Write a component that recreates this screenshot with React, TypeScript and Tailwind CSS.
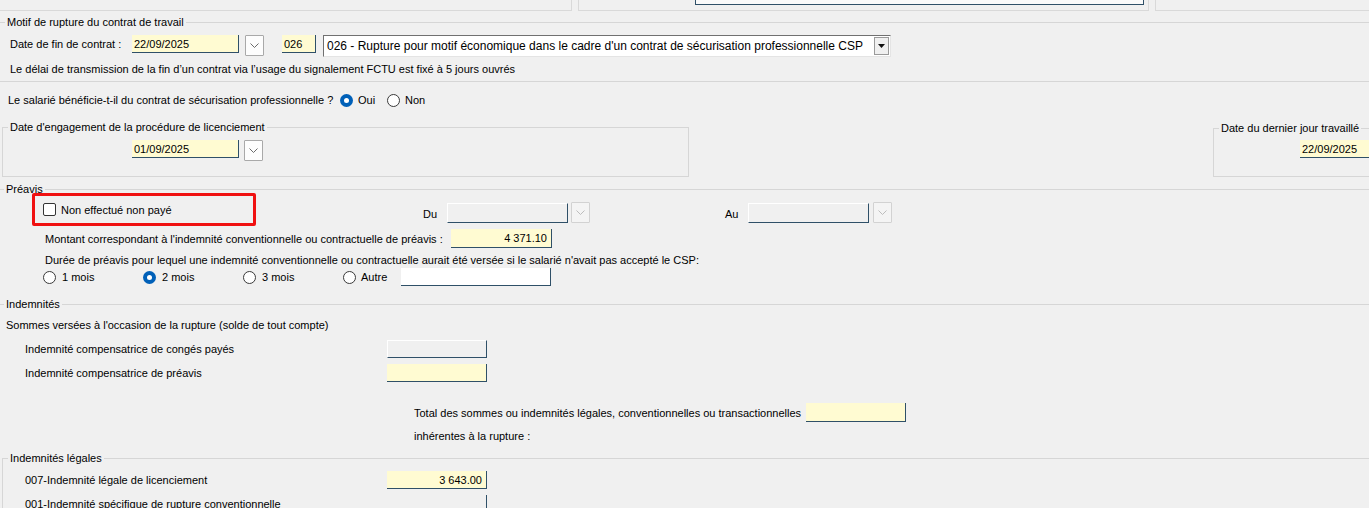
import React from 'react';

type Tone = 'yellow' | 'gray' | 'white' | 'plain';

const toneClass: Record<Tone, string> = {
  yellow: 'bg-[#fffbd2] border-b border-r border-[#2f5068]',
  gray: 'bg-[#f0f0f0] border border-t-white border-l-white border-b-[#2f5068] border-r-[#2f5068]',
  white: 'bg-white border-b border-r border-[#2f5068]',
  plain: 'bg-[#f0f0f0] border-b border-r border-[#2f5068]',
};

const Field = ({
  w,
  h = 'h-[18px]',
  tone = 'yellow',
  value,
  right,
  extra = '',
}: {
  w: string;
  h?: string;
  tone?: Tone;
  value?: string;
  right?: boolean;
  extra?: string;
}) => (
  <div
    className={`${w} ${h} ${toneClass[tone]} ${extra} shrink-0 flex items-center px-[2px] ${
      right ? 'justify-end' : ''
    }`}
  >
    {value && <span className="leading-[14px]">{value}</span>}
  </div>
);

const DropBtn = ({ disabled, extra = '' }: { disabled?: boolean; extra?: string }) => (
  <div
    className={`w-[19px] h-[21px] shrink-0 flex items-center justify-center rounded-[1px] border ${
      disabled ? 'border-[#d2d2d2] bg-[#f4f4f4]' : 'border-[#a9a9a9] bg-[#fdfdfd]'
    } ${extra}`}
  >
    <svg width="9" height="5" viewBox="0 0 9 5" fill="none">
      <path d="M0.5 0.5L4.5 4.5L8.5 0.5" stroke={disabled ? '#bdbdbd' : '#6b6b6b'} strokeWidth="1" />
    </svg>
  </div>
);

const Radio = ({ checked }: { checked?: boolean }) =>
  checked ? (
    <span className="w-[13px] h-[13px] shrink-0 rounded-full bg-[#0060b8] flex items-center justify-center">
      <span className="w-[5px] h-[5px] rounded-full bg-white" />
    </span>
  ) : (
    <span className="w-[13px] h-[13px] shrink-0 rounded-full bg-white border border-[#3a3a3a]" />
  );

const Option = ({ label, checked, w, gap = 'gap-[5px]' }: { label: string; checked?: boolean; w: string; gap?: string }) => (
  <div className={`${w} shrink-0 flex items-center ${gap}`}>
    <Radio checked={checked} />
    <span>{label}</span>
  </div>
);

export default function App() {
  return (
    <div className="w-[1369px] h-[508px] overflow-hidden bg-[#f0f0f0] text-black font-['Liberation_Sans',Arial,sans-serif] text-[11px] leading-[14px]">
      {/* remnants of the upper panel */}
      <div className="flex h-[11px]">
        <div className="w-[572px] border-r border-b border-[#d9d9d9]" />
        <div className="ml-[6px] w-[571px] border-l border-r border-b border-[#d9d9d9]">
          <div className="ml-[116px] w-[449px] h-[5px] bg-[#fafafa] border-b border-l border-r border-[#2f5068]" />
        </div>
        <div className="ml-[6px] flex-1 border-l border-b border-[#d9d9d9]" />
      </div>

      {/* Motif de rupture */}
      <fieldset className="mt-[3px] border-t border-b border-[#d6d6d6] pb-[5px]">
        <legend className="ml-[5px] px-[2px] leading-[16px]">Motif de rupture du contrat de travail</legend>
        <div className="mt-[5px] flex items-start">
          <span className="pl-[10px] w-[132px] leading-[18px] shrink-0">Date de fin de contrat :</span>
          <Field w="w-[107px]" value="22/09/2025" />
          <DropBtn extra="ml-[6px] h-[20px]" />
          <Field w="w-[34px]" value="026" extra="ml-[18px]" />
          <div className="ml-[7px] w-[568px] h-[22px] bg-white border-t border-l border-[#707070] border-r border-b border-r-[#e4e4e4] border-b-[#e4e4e4] flex items-center justify-between pl-[3px] pr-[1px]">
            <span className="text-[12px] leading-[16px]">
              026 - Rupture pour motif économique dans le cadre d'un contrat de sécurisation professionnelle CSP
            </span>
            <span className="w-[15px] h-[18px] bg-[#f0f0f0] border border-[#9a9a9a] flex items-center justify-center">
              <svg width="7" height="4" viewBox="0 0 7 4">
                <path d="M0 0H7L3.5 4Z" fill="#111" />
              </svg>
            </span>
          </div>
        </div>
        <p className="mt-[5px] pl-[10px]">
          Le délai de transmission de la fin d’un contrat via l’usage du signalement FCTU est fixé à 5 jours ouvrés
        </p>
      </fieldset>

      {/* CSP question */}
      <div className="mt-[10px] pl-[8px] flex items-center h-[16px]">
        <span className="w-[332px] shrink-0">Le salarié bénéficie-t-il du contrat de sécurisation professionnelle ?</span>
        <Option label="Oui" checked w="w-[47px]" />
        <Option label="Non" w="w-[60px]" />
      </div>

      {/* dates */}
      <div className="mt-[11px] flex items-start w-[1500px]">
        <fieldset className="ml-[2px] w-[687px] h-[58px] border border-[#d6d6d6] shrink-0">
          <legend className="ml-[5px] px-[2px] leading-[16px]">Date d'engagement de la procédure de licenciement</legend>
          <div className="mt-[5px] pl-[129px] flex items-start">
            <Field w="w-[107px]" value="01/09/2025" />
            <DropBtn extra="ml-[5px] h-[20px]" />
          </div>
        </fieldset>
        <fieldset className="ml-[524px] mt-[1px] w-[200px] h-[57px] border border-[#d6d6d6] shrink-0">
          <legend className="ml-[5px] px-[2px] leading-[16px]">Date du dernier jour travaillé</legend>
          <div className="mt-[4px] pl-[86px]">
            <Field w="w-[100px]" value="22/09/2025" />
          </div>
        </fieldset>
      </div>

      {/* Préavis */}
      <fieldset className="mt-[4px] border-t border-[#d6d6d6]">
        <legend className="ml-[4px] px-[2px] leading-[16px]">Préavis</legend>
        <div className="mt-[5px] flex items-start">
          <div className="ml-[32px] -mt-[9px] w-[224px] h-[33px] border-[3px] border-[#f01010] rounded-[2px] flex items-center pl-[8px] gap-[5px] shrink-0">
            <span className="w-[13px] h-[13px] bg-white border border-[#333] rounded-[2px]" />
            <span>Non effectué non payé</span>
          </div>
          <span className="ml-[167px] mt-[5px] w-[24px] shrink-0">Du</span>
          <Field w="w-[121px]" h="h-[20px]" tone="gray" extra="mt-[1px]" />
          <DropBtn disabled extra="ml-[3px]" />
          <span className="ml-[135px] mt-[5px] w-[23px] shrink-0">Au</span>
          <Field w="w-[121px]" h="h-[20px]" tone="gray" extra="mt-[1px]" />
          <DropBtn disabled extra="ml-[4px]" />
        </div>
        <div className="mt-[3px] pl-[45px] flex items-center h-[19px]">
          <span className="w-[406px] shrink-0">
            Montant correspondant à l'indemnité conventionnelle ou contractuelle de préavis :
          </span>
          <Field w="w-[101px]" h="h-[19px]" value="4 371.10" right extra="pr-[4px]" />
        </div>
        <p className="mt-[5px] pl-[45px]">
          Durée de préavis pour lequel une indemnité conventionnelle ou contractuelle aurait été versée si le salarié
          n'avait pas accepté le CSP:
        </p>
        <div className="mt-[1px] pl-[43px] flex items-center h-[18px]">
          <Option label="1 mois" w="w-[100px]" gap="gap-[6px]" />
          <Option label="2 mois" checked w="w-[100px]" gap="gap-[6px]" />
          <Option label="3 mois" w="w-[100px]" gap="gap-[6px]" />
          <Option label="Autre" w="w-[58px]" gap="gap-[5px]" />
          <Field w="w-[150px]" tone="white" />
        </div>
      </fieldset>

      {/* Indemnités */}
      <fieldset className="mt-[10px] border-t border-[#d6d6d6]">
        <legend className="ml-[4px] px-[2px] leading-[16px]">Indemnités</legend>
        <p className="mt-[6px] pl-[6px]">Sommes versées à l'occasion de la rupture (solde de tout compte)</p>
        <div className="mt-[8px] pl-[25px] flex items-center h-[18px]">
          <span className="w-[362px] shrink-0">Indemnité compensatrice de congés payés</span>
          <Field w="w-[100px]" tone="gray" />
        </div>
        <div className="mt-[6px] pl-[25px] flex items-center h-[18px]">
          <span className="w-[362px] shrink-0">Indemnité compensatrice de préavis</span>
          <Field w="w-[100px]" />
        </div>
        <div className="mt-[21px] pl-[414px] flex items-center h-[19px]">
          <span className="w-[392px] shrink-0">
            Total des sommes ou indemnités légales, conventionnelles ou transactionnelles
          </span>
          <Field w="w-[100px]" h="h-[19px]" />
        </div>
        <p className="mt-[7px] pl-[414px]">inhérentes à la rupture :</p>
      </fieldset>

      {/* Indemnités légales */}
      <fieldset className="mt-[7px] ml-[2px] w-[1400px] border-t border-l border-[#d6d6d6] pb-[20px]">
        <legend className="ml-[5px] px-[2px] leading-[16px]">Indemnités légales</legend>
        <div className="mt-[5px] pl-[22px] flex items-center h-[18px]">
          <span className="w-[362px] shrink-0">007-Indemnité légale de licenciement</span>
          <Field w="w-[100px]" value="3 643.00" right extra="pr-[4px]" />
        </div>
        <div className="mt-[6px] pl-[22px] flex items-center h-[18px]">
          <span className="w-[362px] shrink-0">001-Indemnité spécifique de rupture conventionnelle</span>
          <Field w="w-[100px]" tone="plain" />
        </div>
      </fieldset>
    </div>
  );
}
